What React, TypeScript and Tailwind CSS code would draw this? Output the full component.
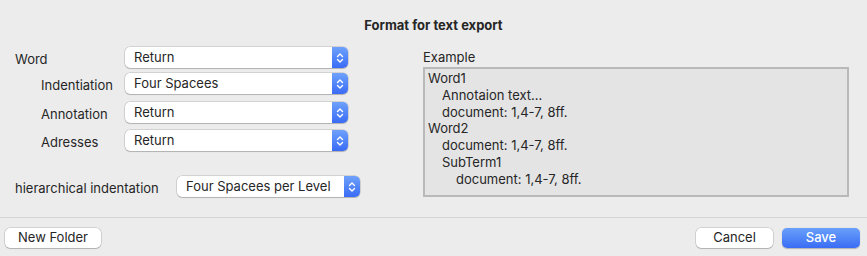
import React from "react";

function Stepper() {
  return (
    <div className="flex h-full w-[16px] items-center justify-center rounded-r-[5px] bg-gradient-to-b from-[#6fa1fb] to-[#3a6af5]">
      <svg width="8" height="12" viewBox="0 0 8 12" fill="none" stroke="white" strokeWidth="1.4" strokeLinecap="round" strokeLinejoin="round">
        <path d="M1.5 4.5 L4 2 L6.5 4.5" />
        <path d="M1.5 7.5 L4 10 L6.5 7.5" />
      </svg>
    </div>
  );
}

function Select({ value, width }: { value: string; width: string }) {
  return (
    <div className={`flex h-[21px] ${width} items-stretch rounded-[5px] bg-white shadow-[0_0_0_0.5px_rgba(0,0,0,0.22),0_1px_1px_rgba(0,0,0,0.15)]`}>
      <div className="flex flex-1 items-center pl-[9px] text-[13px] text-[#262626]">{value}</div>
      <Stepper />
    </div>
  );
}

function Row({ label, value, indent, className }: { label: string; value: string; indent?: boolean; className?: string }) {
  return (
    <div className={`flex items-center ${className ?? ""}`}>
      <div className={`w-[110px] pt-[3px] text-[13px] leading-[16px] text-[#262626] ${indent ? "pl-[26px]" : ""}`}>{label}</div>
      <Select value={value} width="w-[223px]" />
    </div>
  );
}

function Button({ label, primary, width }: { label: string; primary?: boolean; width: string }) {
  if (primary) {
    return (
      <div className={`flex h-[20px] ${width} items-center justify-center rounded-[5px] bg-gradient-to-b from-[#6a9ffa] to-[#3a6cf4] text-[13px] font-medium text-white shadow-[0_0.5px_1px_rgba(0,0,0,0.25)]`}>
        {label}
      </div>
    );
  }
  return (
    <div className={`flex h-[20px] ${width} items-center justify-center rounded-[5px] bg-white text-[13px] text-[#262626] shadow-[0_0_0_0.5px_rgba(0,0,0,0.22),0_1px_1px_rgba(0,0,0,0.15)]`}>
      {label}
    </div>
  );
}

export default function App() {
  const lines: [string, number][] = [
    ["Word1", 0],
    ["Annotaion text...", 1],
    ["document: 1,4-7, 8ff.", 1],
    ["Word2", 0],
    ["document: 1,4-7, 8ff.", 1],
    ["SubTerm1", 1],
    ["document: 1,4-7, 8ff.", 2],
  ];
  const indents = ["pl-0", "pl-[14px]", "pl-[28px]"];

  return (
    <div className="flex h-[256px] w-[867px] flex-col bg-[#ececec] font-['Inter','Liberation_Sans',sans-serif] text-[#262626]">
      <div className="pt-[16px] text-center text-[13px] font-bold leading-[18px]">Format for text export</div>

      <div className="flex h-[183px] pt-[13px]">
        <div className="flex w-[423px] flex-col pl-[15px]">
          <Row label="Word" value="Return" />
          <Row label="Indentiation" value="Four Spacees" indent className="mt-[5px]" />
          <Row label="Annotation" value="Return" indent className="mt-[8px]" />
          <Row label="Adresses" value="Return" indent className="mt-[7px]" />
          <div className="mt-[25px] flex items-center">
            <div className="w-[162px] pt-[3px] text-[13px] leading-[16px]">hierarchical indentation</div>
            <Select value="Four Spacees per Level" width="w-[183px]" />
          </div>
        </div>

        <div className="flex flex-col">
          <div className="mt-[2px] text-[13px] leading-[16px]">Example</div>
          <div className="mt-[2px] h-[130px] w-[426px] border-2 border-[#b9b9b9] bg-[#e4e4e4] pl-[3px] pt-[1px] text-[13px] leading-[16.8px]">
            {lines.map(([t, lvl], i) => (
              <div key={i} className={indents[lvl]}>{t}</div>
            ))}
          </div>
        </div>
      </div>

      <div className="h-px bg-[#d4d4d4]" />

      <div className="flex items-center px-[5px] pt-[10px]">
        <Button label="New Folder" width="w-[96px]" />
        <div className="flex-1" />
        <Button label="Cancel" width="w-[77px]" />
        <div className="w-[9px]" />
        <Button label="Save" primary width="w-[78px]" />
        <div className="w-[2px]" />
      </div>
    </div>
  );
}
